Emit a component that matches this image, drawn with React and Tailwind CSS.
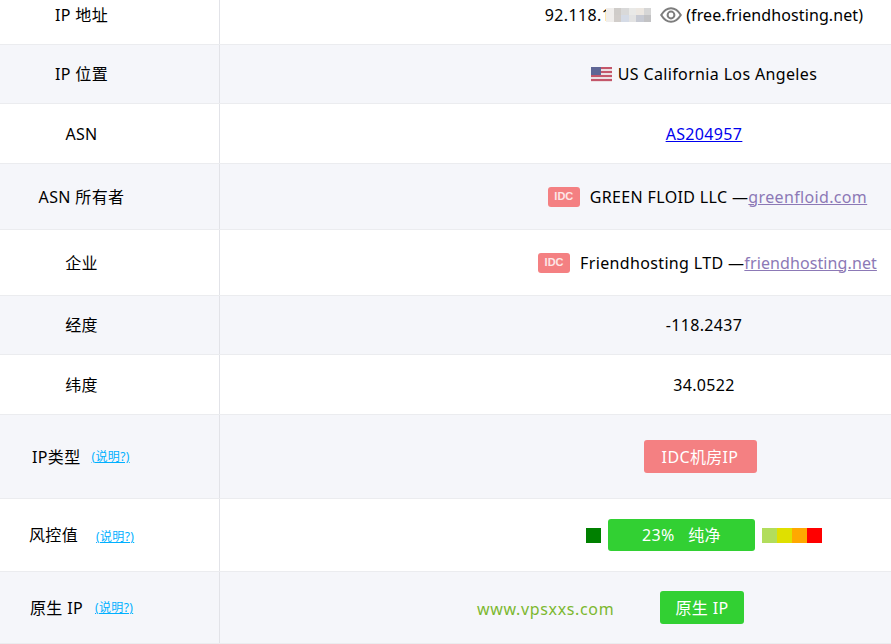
import React from 'react';

function Row({ label, alt, h, children, left, pad }) {
  return (
    <div className={`flex border-b border-[#ebecef] ${alt ? 'bg-[#f5f6fa]' : 'bg-white'} ${h}`}>
      <div className={`w-[220px] shrink-0 border-r border-[#e2e3e8] flex items-center ${pad || ''}`}>
        {left || <div className="w-[163px] text-center">{label}</div>}
      </div>
      <div className={`w-[968px] shrink-0 flex items-center justify-center ${pad || ''}`}>{children}</div>
    </div>
  );
}

function Explain({ className }) {
  return <a href="#" className={`text-[12px] text-[#00b0ff] underline ${className}`}>(说明?)</a>;
}

function Idc() {
  return (
    <span className="inline-flex items-center justify-center w-[32px] h-[20px] rounded-[3px] bg-[#f48082] text-[#fde6e6] text-[11px] font-semibold tracking-normal mr-[10px]" style={{ fontFamily: '"Liberation Sans", sans-serif' }}>
      IDC
    </span>
  );
}

function Flag() {
  return (
    <svg width="21" height="17" viewBox="0 0 21 17" className="mr-[6px]">
      <rect y="1" width="21" height="15" fill="#ecdfe2" />
      <rect y="1" width="21" height="2" fill="#c4566a" />
      <rect y="5" width="21" height="2" fill="#c4566a" />
      <rect y="9" width="21" height="2" fill="#c4566a" />
      <rect y="13" width="21" height="2" fill="#c4566a" />
      <rect y="1" width="10" height="8" fill="#5f6695" />
    </svg>
  );
}

const mosaic = [
  '#f0eeec', '#cfccc9', '#d9d9d9', '#e9e9e7', '#ece7e1', '#d6d6d6',
  '#f0eeec', '#d1cdca', '#d5dbe6', '#e3e3e3', '#c7cad3', '#c2c2c4',
];

function Mosaic() {
  return (
    <span className="grid grid-cols-6 w-[45px] h-[14px] -ml-[5px] mr-[9px] relative">
      {mosaic.map((c, i) => <span key={i} style={{ background: c }} />)}
    </span>
  );
}

export default function App() {
  return (
    <div className="relative w-[891px] h-[644px] overflow-hidden text-[16px] tracking-[0.35px] text-black bg-white" style={{ fontFamily: '"Noto Sans", "Noto Sans CJK SC", sans-serif' }}>
      <Row label="IP 地址" h="h-[45px]" pad="pb-[14px]">
        <span>92.118.1</span>
        <Mosaic />
        <svg width="22" height="16" viewBox="0 0 22 16" fill="none" stroke="#7d7d7d" strokeWidth="2" className="mr-[4px]">
          <path d="M1.2 8C4 3.4 7 1.2 11 1.2S18 3.4 20.8 8C18 12.6 15 14.8 11 14.8S4 12.6 1.2 8z" />
          <circle cx="11" cy="8" r="3.4" />
        </svg>
        <span className="tracking-[0.1px]">(free.friendhosting.net)</span>
      </Row>
      <Row label="IP 位置" alt h="h-[59px]">
        <Flag />
        <span>US California Los Angeles</span>
      </Row>
      <Row label="ASN" h="h-[60px]">
        <a href="#" className="text-[#0000ee] underline">AS204957</a>
      </Row>
      <Row label="ASN 所有者" alt h="h-[66px]">
        <span className="ml-[7px] flex items-center">
          <Idc />
          <span>GREEN FLOID LLC —</span>
          <a href="#" className="text-[#8c79b6] underline">greenfloid.com</a>
        </span>
      </Row>
      <Row label="企业" h="h-[66px]">
        <span className="ml-[7px] flex items-center">
          <Idc />
          <span>Friendhosting LTD —</span>
          <a href="#" className="text-[#8c79b6] underline tracking-[0.1px]">friendhosting.net</a>
        </span>
      </Row>
      <Row label="经度" alt h="h-[59px]">-118.2437</Row>
      <Row label="纬度" h="h-[60px]">34.0522</Row>
      <Row alt h="h-[84px]" left={
        <div className="flex items-center pl-[32px]">
          <span>IP类型</span>
          <Explain className="ml-[11px]" />
        </div>
      }>
        <span className="mr-[8px] flex items-center justify-center w-[113px] h-[33px] rounded-[3px] bg-[#f48082] text-white">IDC机房IP</span>
      </Row>
      <Row h="h-[73px]" left={
        <div className="flex items-center pl-[29px]">
          <span>风控值</span>
          <Explain className="ml-[18px] mt-[4px]" />
        </div>
      }>
        <span className="flex items-center">
          <span className="w-[15px] h-[15px] bg-[#008000]" />
          <span className="mx-[7px] flex items-center justify-center w-[147px] h-[32px] rounded-[3px] bg-[#32d033] text-white">23%&nbsp;&nbsp;&nbsp;纯净</span>
          <span className="w-[15px] h-[15px] bg-[#b2dd5c]" />
          <span className="w-[15px] h-[15px] bg-[#dfe000]" />
          <span className="w-[15px] h-[15px] bg-[#ffa800]" />
          <span className="w-[15px] h-[15px] bg-[#ff0000]" />
        </span>
      </Row>
      <Row alt h="h-[72px]" left={
        <div className="flex items-center pl-[30px]">
          <span>原生 IP</span>
          <Explain className="ml-[12px] mt-[1px]" />
        </div>
      }>
        <span className="mr-[4px] flex items-center justify-center w-[84px] h-[33px] rounded-[3px] bg-[#32d033] text-white">原生 IP</span>
      </Row>
      <span className="absolute left-[477px] top-[597px] text-[#7cb82f] tracking-[0.65px]">www.vpsxxs.com</span>
    </div>
  );
}
